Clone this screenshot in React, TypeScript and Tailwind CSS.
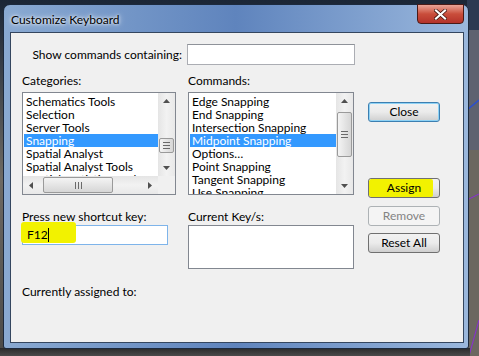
import React from 'react'

const font = { fontFamily: '"Segoe UI", Lato, "Noto Sans", sans-serif' }

function Arrow({ dir }: { dir: 'up' | 'down' | 'left' | 'right' }) {
  const pts = {
    up: '0,4 3.5,0 7,4',
    down: '0,0 3.5,4 7,0',
    left: '4,0 0,3.5 4,7',
    right: '0,0 4,3.5 0,7',
  }[dir]
  const vertical = dir === 'up' || dir === 'down'
  return (
    <svg width={vertical ? 7 : 4} height={vertical ? 4 : 7} viewBox={vertical ? '0 0 7 4' : '0 0 4 7'}>
      <polygon points={pts} fill="#505050" />
    </svg>
  )
}

function VScroll({ thumbTop, thumbH }: { thumbTop: number; thumbH: number }) {
  return (
    <div className="relative w-[17px] h-full bg-gradient-to-r from-[#e5e5e5] via-[#f2f2f2] to-[#e8e8e8] flex flex-col items-center justify-between py-[6px]">
      <Arrow dir="up" />
      <div
        className="absolute left-[1px] w-[15px] rounded-[2px] border border-[#9a9a9a] bg-gradient-to-r from-[#f4f4f4] to-[#d6d6d6] flex flex-col items-center justify-center gap-[2px]"
        style={{ top: thumbTop, height: thumbH }}
      >
        <div className="w-[7px] h-px bg-[#6a6a6a]" />
        <div className="w-[7px] h-px bg-[#6a6a6a]" />
        <div className="w-[7px] h-px bg-[#6a6a6a]" />
      </div>
      <Arrow dir="down" />
    </div>
  )
}

function ListBox({
  items,
  selected,
  className,
  scroll,
  hscroll,
}: {
  items: string[]
  selected: number
  className: string
  scroll: React.ReactNode
  hscroll?: boolean
}) {
  return (
    <div className={`border border-[#828790] bg-white flex flex-col overflow-hidden ${className}`}>
      <div className="flex flex-1 min-h-0">
        <div className="flex-1 overflow-hidden pt-[2px] pl-px">
          {items.map((it, i) => (
            <div
              key={it}
              className={`h-[13px] leading-[13px] text-[12px] pl-[2px] whitespace-nowrap ${
                i === selected ? 'bg-[#3399ff] text-white' : 'text-black'
              }`}
            >
              {it}
            </div>
          ))}
        </div>
        {scroll}
      </div>
      {hscroll && (
        <div className="flex h-[18px] shrink-0">
          <div className="relative flex-1 bg-gradient-to-b from-[#e5e5e5] via-[#f2f2f2] to-[#e8e8e8] flex items-center justify-between px-[6px]">
            <Arrow dir="left" />
            <div className="absolute left-[20px] top-px h-[16px] w-[70px] rounded-[2px] border border-[#9a9a9a] bg-gradient-to-b from-[#f4f4f4] to-[#d6d6d6] flex items-center justify-center gap-[2px]">
              <div className="w-px h-[7px] bg-[#6a6a6a]" />
              <div className="w-px h-[7px] bg-[#6a6a6a]" />
              <div className="w-px h-[7px] bg-[#6a6a6a]" />
            </div>
            <Arrow dir="right" />
          </div>
          <div className="w-[17px] bg-[#f0f0f0]" />
        </div>
      )}
    </div>
  )
}

function Button({
  label,
  variant = 'normal',
}: {
  label: string
  variant?: 'normal' | 'focus' | 'disabled' | 'yellow'
}) {
  const base = 'relative w-[72px] h-[20px] rounded-[3px] border text-[12px] flex items-center justify-center overflow-hidden'
  if (variant === 'disabled')
    return <div className={`${base} border-[#adb2b5] bg-[#f4f4f4] text-[#838383]`}>{label}</div>
  return (
    <div
      className={`${base} ${
        variant === 'focus' ? 'border-[#3c7fb1] shadow-[inset_0_0_0_1px_#8ed2f5]' : 'border-[#707070]'
      } bg-gradient-to-b from-[#f2f2f2] via-[#ebebeb] to-[#cfcfcf] text-black`}
    >
      {variant === 'yellow' && (
        <div className="absolute left-0 top-0 w-[64px] h-[18px] bg-[#f2f200] rounded-[2px]" />
      )}
      <span className="relative">{label}</span>
    </div>
  )
}

export default function App() {
  return (
    <div
      className="relative w-[479px] h-[356px] overflow-hidden bg-gradient-to-b from-[#1b2636] via-[#6e6a63] to-[#4b4a48]"
      style={font}
    >
      {/* photo background on the right */}
      <svg className="absolute right-0 top-0" width="12" height="356" viewBox="0 0 12 356">
        <rect x="0" y="0" width="12" height="356" fill="#6c6760" />
        <rect x="0" y="0" width="12" height="30" fill="#2c3a52" />
        <rect x="0" y="30" width="12" height="120" fill="#5e6270" />
        <path d="M0 110 L12 100" stroke="#2b4fd0" strokeWidth="1.5" />
        <path d="M0 200 L12 194" stroke="#8a2bd8" strokeWidth="1" />
        <path d="M2 356 L12 320" stroke="#8a2bd8" strokeWidth="1" />
      </svg>
      <div className="absolute left-0 bottom-0 w-[470px] h-[8px] bg-gradient-to-b from-[#2a2a2a] to-[#4a4a4a]" />

      {/* window */}
      <div className="relative ml-[3px] mt-[4px] w-[466px] h-[345px] rounded-t-[7px] rounded-b-[3px] border border-[#1c2a3e] bg-gradient-to-r from-[#8aaad2] via-[#5f84bd] to-[#9bb8dd] flex flex-col">
        <div className="h-[27px] flex items-start justify-between pl-[7px] pr-[4px]">
          <div className="mt-[6px] text-[12px] text-black [text-shadow:0_0_6px_#ffffff,0_0_3px_#ffffff]">
            Customize Keyboard
          </div>
          <div className="-mt-px w-[47px] h-[20px] rounded-b-[4px] border border-[#4a1a16] bg-gradient-to-b from-[#e8a396] via-[#c94d3b] to-[#b4322a] flex items-center justify-center">
            <svg width="13" height="11" viewBox="0 0 13 11">
              <path d="M2 1.5 L11 9.5 M11 1.5 L2 9.5" stroke="#3a0f0a" strokeWidth="3.6" strokeLinecap="square" />
              <path d="M2 1.5 L11 9.5 M11 1.5 L2 9.5" stroke="#ffffff" strokeWidth="2.2" strokeLinecap="square" />
            </svg>
          </div>
        </div>

        {/* client area */}
        <div className="ml-[6px] w-[454px] h-[311px] border border-[#34465f] bg-[#f0f0f0] text-[12px] leading-[14px] text-black pl-[11px] pt-[11px]">
          <div className="flex items-center">
            <div className="w-[160px] text-right whitespace-nowrap">Show commands containing:</div>
            <div className="ml-[5px] w-[168px] h-[21px] border border-[#abadb3] border-t-[#8e9299] bg-white" />
          </div>

          <div className="mt-[9px] grid grid-cols-[154px_166px_72px] gap-x-[12px] gap-y-[15px]">
            <div className="flex flex-col">
              <div className="h-[14px]">Categories:</div>
              <ListBox
                className="mt-[4px] h-[103px]"
                selected={3}
                hscroll
                items={[
                  'Schematics Tools',
                  'Selection',
                  'Server Tools',
                  'Snapping',
                  'Spatial Analyst',
                  'Spatial Analyst Tools',
                  'Spatial Statistics Tools',
                ]}
                scroll={<VScroll thumbTop={45} thumbH={15} />}
              />
            </div>
            <div className="flex flex-col">
              <div className="h-[14px]">Commands:</div>
              <ListBox
                className="mt-[4px] h-[103px]"
                selected={3}
                items={[
                  'Edge Snapping',
                  'End Snapping',
                  'Intersection Snapping',
                  'Midpoint Snapping',
                  'Options…',
                  'Point Snapping',
                  'Tangent Snapping',
                  'Use Snapping',
                ]}
                scroll={<VScroll thumbTop={19} thumbH={45} />}
              />
            </div>
            <div className="row-span-2 ml-[2px] flex flex-col pt-[28px]">
              <Button label="Close" variant="focus" />
              <div className="mt-[56px]">
                <Button label="Assign" variant="yellow" />
              </div>
              <div className="mt-[8px]">
                <Button label="Remove" variant="disabled" />
              </div>
              <div className="mt-[7px]">
                <Button label="Reset All" />
              </div>
            </div>

            <div className="w-[146px] flex flex-col">
              <div className="h-[14px] whitespace-nowrap">Press new shortcut key:</div>
              <div className="relative mt-[1px] h-[20px] border border-[#7eb4ea] bg-white flex items-center pl-[4px]">
                <div className="absolute -left-[2px] -top-[4px] w-[55px] h-[21px] bg-[#f2f200] rounded-[3px]" />
                <span className="relative">F12</span>
                <span className="relative w-px h-[14px] bg-black" />
              </div>
            </div>
            <div className="flex flex-col">
              <div className="h-[14px]">Current Key/s:</div>
              <div className="mt-[1px] h-[44px] border border-[#828790] bg-white" />
            </div>
          </div>

          <div className="mt-[16px] h-[14px]">Currently assigned to:</div>
        </div>
      </div>
    </div>
  )
}
